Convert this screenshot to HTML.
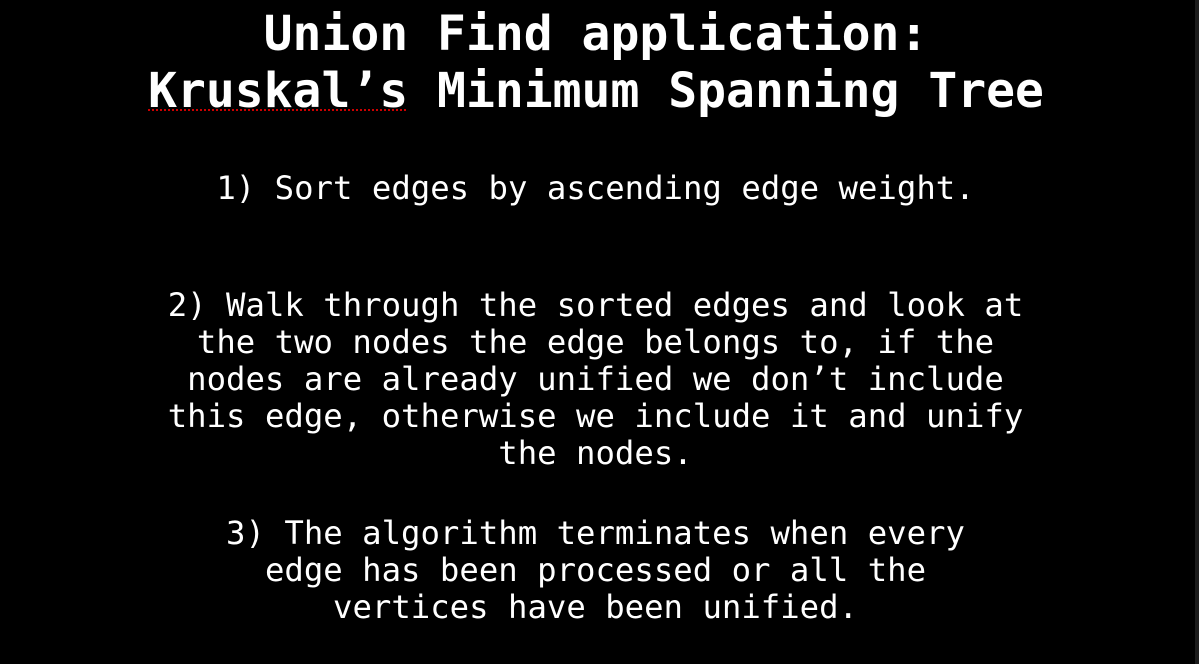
<!DOCTYPE html>
<html><head><meta charset="utf-8"><style>
body{margin:0;width:1199px;height:664px;background:#000;overflow:hidden;position:relative;font-family:"DejaVu Sans Mono","Liberation Mono",monospace;color:#fff}
.strip{position:absolute;right:0;top:0;width:4px;height:664px;background:#1c1c1c}
.t{position:absolute;left:1px;width:1190px;text-align:center;font-weight:bold;font-size:48px;line-height:57px;white-space:pre}
.b{position:absolute;left:0;width:1191px;text-align:center;font-size:32.3px;line-height:37px;white-space:pre}
.sq{text-decoration:underline dotted #c00;text-underline-offset:2px;text-decoration-thickness:2px}
</style></head><body>
<div class="strip"></div>
<div class="t" style="top:6px">Union Find application:
<span class="sq">Kruskal’s</span> Minimum Spanning Tree</div>
<div class="b" style="top:170px">1) Sort edges by ascending edge weight.</div>
<div class="b" style="top:287px">2) Walk through the sorted edges and look at
the two nodes the edge belongs to, if the
nodes are already unified we don’t include
this edge, otherwise we include it and unify
the nodes.</div>
<div class="b" style="top:515px">3) The algorithm terminates when every
edge has been processed or all the
vertices have been unified.</div>
</body></html>
